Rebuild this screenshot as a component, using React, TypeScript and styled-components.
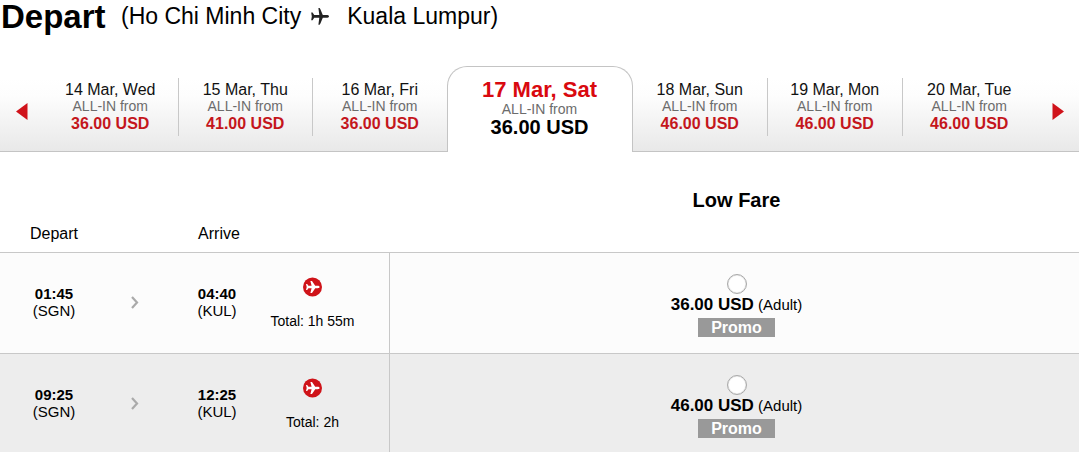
import React, { useState } from 'react';
import styled, { createGlobalStyle, css } from 'styled-components';

const GlobalStyle = createGlobalStyle`
  *, *::before, *::after { box-sizing: border-box; }
  body {
    margin: 0;
    background: #fff;
    color: #000;
    font-family: "Liberation Sans", Arial, sans-serif;
  }
  button, input { font: inherit; color: inherit; margin: 0; }
`;

const Page = styled.main`
  display: flex;
  flex-direction: column;
`;

const Heading = styled.header`
  display: flex;
  align-items: center;
  height: 34px;
  margin-bottom: 32px;
`;

const Title = styled.h1`
  margin: 0;
  padding-left: 1px;
  width: 121px;
  font-size: 33px;
  line-height: 34px;
`;

const Route = styled.p`
  display: flex;
  align-items: center;
  margin: 0;
  padding-bottom: 2px;
  font-size: 23px;
  line-height: 30px;
  white-space: pre;
`;

const RoutePlane = styled.svg`
  width: 20px;
  height: 20px;
  margin: 0 17px 0 9px;
`;

const DateBar = styled.nav`
  display: flex;
  align-items: flex-end;
  height: 86px;
  background: linear-gradient(#fff 12px, #fdfdfd 30px, #e8e8e8) no-repeat;
`;

const edge = css`border-bottom: 1px solid #c4c4c4;`;

const ArrowButton = styled.button`
  ${edge}
  display: flex;
  justify-content: center;
  flex: 0 0 43px;
  height: 86px;
  padding: 37px 0 0;
  border-width: 0 0 1px;
  background: none;
  cursor: pointer;
  svg { width: 12px; height: 17px; }
`;

const DayCell = styled.div`
  ${edge}
  flex: 1 1 0;
  height: 74px;
  & + & > button { border-left: 1px solid #c8c8c8; }
`;

const DayButton = styled.button`
  display: flex;
  flex-direction: column;
  align-items: center;
  width: 100%;
  height: 58px;
  padding: 3px 0 0;
  border: 0;
  background: none;
  white-space: nowrap;
  cursor: pointer;
`;

const ActiveDay = styled.button`
  display: flex;
  flex-direction: column;
  align-items: center;
  flex: 0 0 186px;
  height: 86px;
  padding: 11px 0 0;
  border: 1px solid #c4c4c4;
  border-bottom: 0;
  border-radius: 20px 20px 0 0;
  background: #fff;
  cursor: pointer;
`;

const DayName = styled.span<{ $active?: boolean }>`
  font-size: ${p => (p.$active ? 22 : 16)}px;
  line-height: ${p => (p.$active ? 24 : 18)}px;
  font-weight: ${p => (p.$active ? 700 : 400)};
  color: ${p => (p.$active ? '#d9090f' : '#111')};
`;

const AllIn = styled.span`
  font-size: 14px;
  line-height: 14px;
  color: #6c6c6c;
`;

const DayPrice = styled.span<{ $active?: boolean }>`
  font-size: ${p => (p.$active ? 20 : 16)}px;
  line-height: 22px;
  font-weight: 700;
  color: ${p => (p.$active ? '#000' : '#c4161c')};
`;

const Flights = styled.table`
  width: 100%;
  table-layout: fixed;
  border-spacing: 0;
  text-align: center;
`;

const HeadCell = styled.th<{ $fare?: boolean }>`
  height: 101px;
  padding: ${p => (p.$fare ? '36px 0 0 4px' : '73px 0 0 4px')};
  border-bottom: 1px solid #c8c8c8;
  vertical-align: top;
  font-size: ${p => (p.$fare ? 20 : 16)}px;
  line-height: ${p => (p.$fare ? 24 : 18)}px;
  font-weight: ${p => (p.$fare ? 700 : 400)};
  &:first-child { padding-left: 18px; }
`;

const Row = styled.tr`
  background: #fcfcfc;
  &:nth-child(even) { background: #ededed; }
`;

const Cell = styled.td`
  padding: 32px 0 0;
  border-bottom: 1px solid #c8c8c8;
  vertical-align: top;
  &:first-child { padding-left: 18px; }
  ${Row}:last-child & { border-bottom: 0; }
`;

const ChevronCell = styled(Cell)`
  padding-top: 43px;
  svg { display: block; width: 8px; height: 13px; margin: 0 auto; }
`;

const FlightCell = styled(Cell)`
  padding: 24px 18px 0 0;
  border-right: 1px solid #c8c8c8;
  svg { display: block; width: 20px; height: 20px; margin: 0 auto 16px; }
`;

const FareCell = styled(Cell)`
  padding: 21px 0 16px 4px;
  ${Row}:last-child & { padding-bottom: 14px; }
`;

const Time = styled.div`
  font-size: 15px;
  line-height: 17px;
  font-weight: 700;
`;

const Airport = styled.div`
  font-size: 15px;
  line-height: 17px;
`;

const Duration = styled.div`
  font-size: 14px;
  line-height: 17px;
  white-space: nowrap;
`;

const Fare = styled.label`
  display: inline-flex;
  flex-direction: column;
  align-items: center;
  vertical-align: top;
  cursor: pointer;
`;

const Radio = styled.input`
  appearance: none;
  width: 20px;
  height: 20px;
  border: 1px solid #a9a9a9;
  border-radius: 50%;
  background: #fff;
  box-shadow: inset 0 0 1px #999;
  &:checked { background: radial-gradient(#c4161c 0 5px, #fff 6px); }
`;

const FareLine = styled.span`
  font-size: 15px;
  line-height: 22px;
  margin-bottom: 2px;
`;

const Amount = styled.strong`
  font-size: 17px;
`;

const Promo = styled.span`
  width: 77px;
  background: #999;
  color: #fff;
  font-size: 16px;
  line-height: 19px;
  font-weight: 700;
`;

const PlaneBadge = () => (
  <svg viewBox="0 0 20 20" aria-hidden="true">
    <circle cx="9.5" cy="10" r="9.5" fill="#cf1319" />
    <path
      d="M16.6 10c0-.8-.9-1.2-2-1.2h-2.4L9 4H7.4l1.2 4.8H5.4L4.2 7H3l.7 3L3 13h1.2l1.2-1.8h3.2L7.4 16H9l3.2-4.8h2.4c1.1 0 2-.4 2-1.2z"
      fill="#fff"
    />
  </svg>
);

const before = [
  { day: '14 Mar, Wed', price: '36.00 USD' },
  { day: '15 Mar, Thu', price: '41.00 USD' },
  { day: '16 Mar, Fri', price: '36.00 USD' },
];
const after = [
  { day: '18 Mar, Sun', price: '46.00 USD' },
  { day: '19 Mar, Mon', price: '46.00 USD' },
  { day: '20 Mar, Tue', price: '46.00 USD' },
];
const flights = [
  { depart: '01:45', arrive: '04:40', total: '1h 55m', price: '36.00 USD' },
  { depart: '09:25', arrive: '12:25', total: '2h', price: '46.00 USD' },
];

const Day = ({ day, price }: { day: string; price: string }) => (
  <DayCell>
    <DayButton type="button">
      <DayName>{day}</DayName>
      <AllIn>ALL-IN from</AllIn>
      <DayPrice>{price}</DayPrice>
    </DayButton>
  </DayCell>
);

export default function App() {
  const [selected, setSelected] = useState('');
  return (
    <Page>
      <GlobalStyle />
      <Heading>
        <Title>Depart</Title>
        <Route>
          <span>(Ho Chi Minh City</span>
          <RoutePlane viewBox="0 0 20 20" aria-hidden="true">
            <path
              d="M19 10.4c0-.8-1.2-1.3-2.6-1.3h-3.6L10.4 3.2 9.6 2H8.4l.9 7.1H4.2L2.6 6.6H1.2l.6 3.8-.6 3.8h1.4l1.6-2.5h5.1l-.9 7.1h1.2l.8-1.2 2.4-5.9h3.6c1.4 0 2.6-.5 2.6-1.3z"
              fill="#222"
            />
          </RoutePlane>
          <span>Kuala Lumpur)</span>
        </Route>
      </Heading>
      <DateBar aria-label="Departure date">
        <ArrowButton type="button" aria-label="Earlier dates">
          <svg viewBox="0 0 12 17"><path d="M0 8.5 11.5 0v17z" fill="#d0121a" /></svg>
        </ArrowButton>
        {before.map(d => <Day key={d.day} {...d} />)}
        <ActiveDay type="button" aria-current="date">
          <DayName $active>17 Mar, Sat</DayName>
          <AllIn>ALL-IN from</AllIn>
          <DayPrice $active>36.00 USD</DayPrice>
        </ActiveDay>
        {after.map(d => <Day key={d.day} {...d} />)}
        <ArrowButton type="button" aria-label="Later dates">
          <svg viewBox="0 0 12 17"><path d="M12 8.5.5 0v17z" fill="#d0121a" /></svg>
        </ArrowButton>
      </DateBar>
      <Flights>
        <colgroup>
          <col style={{ width: 90 }} />
          <col style={{ width: 90 }} />
          <col style={{ width: 74 }} />
          <col style={{ width: 136 }} />
          <col />
        </colgroup>
        <thead>
          <tr>
            <HeadCell scope="col">Depart</HeadCell>
            <HeadCell />
            <HeadCell scope="col">Arrive</HeadCell>
            <HeadCell />
            <HeadCell scope="col" $fare>Low Fare</HeadCell>
          </tr>
        </thead>
        <tbody>
          {flights.map(f => (
            <Row key={f.depart}>
              <Cell>
                <Time>{f.depart}</Time>
                <Airport>(SGN)</Airport>
              </Cell>
              <ChevronCell>
                <svg viewBox="0 0 8 13" aria-hidden="true">
                  <path d="M1 1l5 5.5L1 12" fill="none" stroke="#aaa" strokeWidth="2.2" />
                </svg>
              </ChevronCell>
              <Cell>
                <Time>{f.arrive}</Time>
                <Airport>(KUL)</Airport>
              </Cell>
              <FlightCell>
                <PlaneBadge />
                <Duration>Total: {f.total}</Duration>
              </FlightCell>
              <FareCell>
                <Fare>
                  <Radio
                    type="radio"
                    name="fare"
                    value={f.depart}
                    checked={selected === f.depart}
                    onChange={() => setSelected(f.depart)}
                  />
                  <FareLine>
                    <Amount>{f.price}</Amount> (Adult)
                  </FareLine>
                  <Promo>Promo</Promo>
                </Fare>
              </FareCell>
            </Row>
          ))}
        </tbody>
      </Flights>
    </Page>
  );
}
